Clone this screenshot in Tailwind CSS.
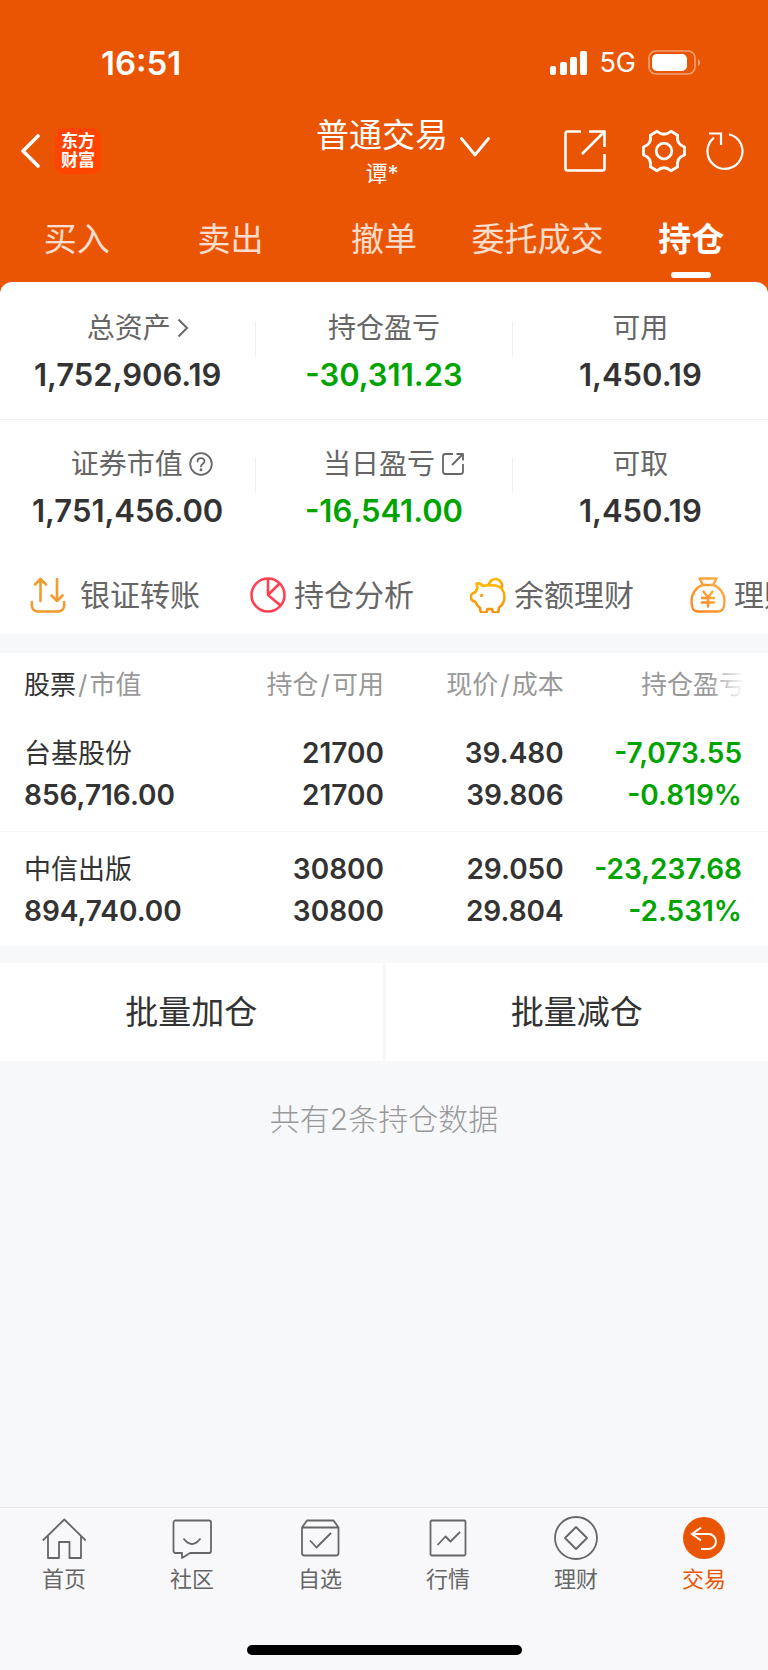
<!DOCTYPE html>
<html lang="zh-CN">
<head>
  <meta charset="UTF-8" />
  <meta name="viewport" content="width=device-width, initial-scale=1.0" />
  <title>普通交易 - 持仓</title>
  <script src="https://cdn.jsdelivr.net/npm/@tailwindcss/browser@4"></script>
</head>
<body class="bg-[#f7f8fa] text-[#333] font-['Inter','Noto_Sans_CJK_SC',sans-serif]">
  <div class="min-h-screen flex flex-col">

    <header class="bg-[#ea5504] text-white">
      <!-- Barra de estado -->
      <div class="flex items-center justify-between pt-[41px] pb-7 pl-[101px] pr-[67px]">
        <span class="text-[33px] leading-[44px] font-semibold">16:51</span>
        <div class="flex items-center gap-3">
          <svg class="w-[37px] h-6" viewBox="0 0 37 24" fill="currentColor">
            <rect x="0" y="15" width="6" height="9" rx="2" />
            <rect x="10" y="11" width="7" height="13" rx="2" />
            <rect x="20" y="6" width="7" height="18" rx="2" />
            <rect x="30" y="0" width="7" height="24" rx="2" />
          </svg>
          <span class="text-[27px] leading-[44px]">5G</span>
          <svg class="w-[53px] h-[26px]" viewBox="0 0 53 26">
            <rect x="1" y="1" width="46" height="23" rx="7" fill="none" stroke="#fff" stroke-opacity=".45" stroke-width="1.6" />
            <rect x="4" y="4" width="35" height="17" rx="5" fill="#fff" />
            <path d="M50 9v7q2-1 2-3.500t-2-3.500z" fill="#fff" fill-opacity=".5" />
          </svg>
        </div>
      </div>

      <!-- Navegación superior -->
      <div class="grid grid-cols-[1fr_auto_1fr] items-center pl-5 pr-6">
        <div class="flex items-center gap-[14px]">
          <button aria-label="返回">
            <svg class="w-[21px] h-[34px]" viewBox="0 0 21 34" fill="none" stroke="currentColor" stroke-width="3.6" stroke-linecap="round" stroke-linejoin="round">
              <path d="M18 2 3 17l15 15" />
            </svg>
          </button>
          <div class="flex flex-col items-center justify-center size-[46px] rounded-[9px] bg-[#ff4400] text-[17px] leading-[19px] font-bold">
            <span>东方</span>
            <span>财富</span>
          </div>
        </div>
        <div class="text-center">
          <h1 class="text-[33px] leading-[44px]">普通交易</h1>
          <p class="text-[22px] leading-8">谭*</p>
        </div>
        <div class="flex items-center">
          <button class="ml-3 mb-2" aria-label="切换账户">
            <svg class="w-[30px] h-5" viewBox="0 0 30 20" fill="none" stroke="currentColor" stroke-width="2.800" stroke-linecap="round" stroke-linejoin="round">
              <path d="M1.500 1.500 15 18 28.500 1.500" />
            </svg>
          </button>
          <button class="ml-auto" aria-label="分享">
            <svg class="size-[42px]" viewBox="0 0 42 42" fill="none" stroke="currentColor" stroke-width="2.600" stroke-linejoin="round">
              <path d="M17 1.500H3.500a2 2 0 0 0-2 2v35a2 2 0 0 0 2 2h35a2 2 0 0 0 2-2V24M25 1.500h15.500V17M40 2 18 24" />
            </svg>
          </button>
          <button class="ml-9" aria-label="设置">
            <svg class="size-11" viewBox="-22 -22 44 44" fill="none" stroke="currentColor" stroke-width="2.800" stroke-linejoin="round">
              <path d="M20.500 4Q12 6.900 13.700 15.800L7 19.800Q0 13.800-7 19.800L-13.700 15.800Q-12 6.900-20.500 4V-4Q-12-6.900-13.700-15.800L-7-19.800Q0-13.800 7-19.800L13.700-15.800Q12-6.900 20.500-4z" />
              <circle r="7.800" />
            </svg>
          </button>
          <button class="ml-5" aria-label="刷新">
            <svg class="size-[38px]" viewBox="0 0 38 38" fill="none" stroke="currentColor" stroke-width="2.200">
              <path d="M23 2.300A17.500 17.500 0 1 1 8 5.700M3 1.500h12V13" />
            </svg>
          </button>
        </div>
      </div>

      <!-- Pestañas -->
      <nav class="grid grid-cols-5 pt-7 pb-1 text-center text-[33px] leading-[44px] text-white/80">
        <a href="#">买入</a>
        <a href="#">卖出</a>
        <a href="#">撤单</a>
        <a href="#">委托成交</a>
        <a href="#" class="flex flex-col items-center gap-[11px] font-bold text-white">
          持仓
          <span class="w-10 h-[6px] rounded-full bg-white"></span>
        </a>
      </nav>
    </header>

    <!-- Resumen de activos -->
    <div class="bg-[#ea5504]">
      <section class="bg-white rounded-t-xl">
        <div class="flex items-start pt-7 pb-[22px] border-b border-[#f3f3f5] text-center">
          <div class="flex-1 flex flex-col gap-[7px]">
            <a href="#" class="flex items-center justify-center gap-[6px] pl-5 text-[28px] leading-9 text-[#666]">
              总资产
              <svg class="w-3 h-5" viewBox="0 0 12 20" fill="none" stroke="currentColor" stroke-width="2">
                <path d="m1.500 1.500 8.500 8.500-8.500 8.500" />
              </svg>
            </a>
            <span class="text-[31px] leading-[44px] font-semibold">1,752,906.19</span>
          </div>
          <div class="w-px h-[34px] mt-3 bg-[#eeeeee]"></div>
          <div class="flex-1 flex flex-col gap-[7px]">
            <span class="text-[28px] leading-9 text-[#666]">持仓盈亏</span>
            <span class="text-[31px] leading-[44px] font-semibold text-[#00a400]">-30,311.23</span>
          </div>
          <div class="w-px h-[34px] mt-3 bg-[#eeeeee]"></div>
          <div class="flex-1 flex flex-col gap-[7px]">
            <span class="text-[28px] leading-9 text-[#666]">可用</span>
            <span class="text-[31px] leading-[44px] font-semibold">1,450.19</span>
          </div>
        </div>

        <div class="flex items-start pt-[26px] pb-[23px] text-center">
          <div class="flex-1 flex flex-col gap-[7px]">
            <div class="flex items-center justify-center gap-[6px] pl-7 text-[28px] leading-9 text-[#666]">
              证券市值
              <button aria-label="说明">
                <svg class="size-6" viewBox="0 0 24 24" fill="none" stroke="currentColor" stroke-width="1.800" stroke-linecap="round">
                  <circle cx="12" cy="12" r="10.800" />
                  <path d="M8.500 9.500C8.500 5 15.500 5 15.500 9.300c0 2.400-3.300 2.600-3.500 5.200" />
                  <circle cx="12" cy="17.800" r=".6" fill="currentColor" />
                </svg>
              </button>
            </div>
            <span class="text-[31px] leading-[44px] font-semibold">1,751,456.00</span>
          </div>
          <div class="w-px h-[34px] mt-3 bg-[#eeeeee]"></div>
          <div class="flex-1 flex flex-col gap-[7px]">
            <a href="#" class="flex items-center justify-center gap-[6px] pl-5 text-[28px] leading-9 text-[#666]">
              当日盈亏
              <svg class="size-6" viewBox="0 0 24 24" fill="none" stroke="currentColor" stroke-width="1.800" stroke-linejoin="round">
                <path d="M12 2H4.500A2.500 2.500 0 0 0 2 4.500v15A2.500 2.500 0 0 0 4.500 22h15a2.500 2.500 0 0 0 2.500-2.500V12M15.500 2H22v6.500M22 2 11 13" />
              </svg>
            </a>
            <span class="text-[31px] leading-[44px] font-semibold text-[#00a400]">-16,541.00</span>
          </div>
          <div class="w-px h-[34px] mt-3 bg-[#eeeeee]"></div>
          <div class="flex-1 flex flex-col gap-[7px]">
            <span class="text-[28px] leading-9 text-[#666]">可取</span>
            <span class="text-[31px] leading-[44px] font-semibold">1,450.19</span>
          </div>
        </div>

        <!-- Accesos directos -->
        <div class="flex items-center h-[78px] pl-[30px] overflow-hidden whitespace-nowrap text-[30px] leading-10 text-[#666]">
          <a href="#" class="flex shrink-0 items-center gap-[14px] w-[220px]">
            <svg class="size-9" viewBox="0 0 36 36" fill="none" stroke="#f29b2e" stroke-width="2.600" stroke-linecap="round" stroke-linejoin="round">
              <path d="M10.500 24V2M5 7.500 10.500 2l5.500 5.500M27 2v22M21.500 18.500 27 24l5.500-5.500M1.800 25v3.500a6 6 0 0 0 6 6h20.400a6 6 0 0 0 6-6V25" />
            </svg>
            银证转账
          </a>
          <a href="#" class="flex shrink-0 items-center gap-2 w-[220px]">
            <svg class="size-9" viewBox="0 0 36 36" fill="none" stroke="#ff4050" stroke-width="2.600" stroke-linejoin="round">
              <circle cx="18" cy="18" r="16.500" />
              <path d="M18 1.500V18L29.500 6.500M18 18l12.500 10.500" />
            </svg>
            持仓分析
          </a>
          <a href="#" class="flex shrink-0 items-center gap-2 w-[220px]">
            <svg class="size-9" viewBox="0 0 36 36" fill="none" stroke="url(#pig)" stroke-width="2.600" stroke-linejoin="round">
              <defs>
                <linearGradient id="pig" x1="0" y1="0" x2="0" y2="1">
                  <stop offset="0" stop-color="#ffb800" />
                  <stop offset="1" stop-color="#f78f0c" />
                </linearGradient>
              </defs>
              <path d="M19 8.500A6.500 6.500 0 1 1 31 12" />
              <path d="M6.500 6.500c3-.5 5 .5 6.500 2.500 4-1 8.500-1 12.500-.5 5.500 1 9 5.500 9 11.500 0 4.500-2 8-5.500 10.500l-.5 3.500q-.5 1.500-2 1.500h-2q-1.500 0-2-1.500l-.5-2h-4.500l-.5 2q-.5 1.500-2 1.500h-2.500q-1.500 0-2-1.500L10 31c-2-1.500-3.500-3.500-4.500-6l-3-1.500q-1.500-1-1.500-2.500v-2q0-1.500 1.500-2.500l3-1.500c.5-1.500 1-2.500 2-3.500z" />
              <circle cx="11.500" cy="18.500" r="1.700" fill="#f9a010" stroke="none" />
            </svg>
            余额理财
          </a>
          <a href="#" class="flex shrink-0 items-center gap-2 w-[220px]">
            <svg class="size-9" viewBox="0 0 36 36" fill="none" stroke="url(#bag)" stroke-width="2.400" stroke-linecap="round" stroke-linejoin="round">
              <defs>
                <linearGradient id="bag" x1="1" y1="0" x2="0" y2="1">
                  <stop offset="0" stop-color="#ffb04a" />
                  <stop offset="1" stop-color="#ff8419" />
                </linearGradient>
              </defs>
              <path d="M9.500 1.500h17L23 8H13zM13 8C6 10 1.500 17 1.500 24c0 7 1.500 10.500 6.500 10.500h20c5 0 6.500-3.500 6.500-10.500C34.500 17 30 10 23 8" />
              <path d="m13.500 14.500 4.500 6 4.500-6M12 21h12M12 25.500h12M18 21v8.500" />
            </svg>
            理财
          </a>
        </div>
      </section>
    </div>

    <!-- Posiciones -->
    <section class="mt-[19px] bg-white">
      <table class="w-full table-fixed text-right text-[28px] leading-[42px] font-semibold">
        <colgroup>
          <col class="w-[25%]" />
          <col class="w-[25%]" />
          <col class="w-[23.4%]" />
          <col />
        </colgroup>
        <thead>
          <tr class="h-[61px] text-[26px] text-[#999] whitespace-nowrap">
            <th class="pl-6 pt-[2px] text-left font-normal"><span class="text-[#333]">股票</span><span class="mx-[2px]">/</span>市值</th>
            <th class="pt-[2px] font-normal">持仓<span class="mx-[2px]">/</span>可用</th>
            <th class="pt-[2px] font-normal">现价<span class="mx-[2px]">/</span>成本</th>
            <th class="pt-[2px] pr-[23px] font-normal">
              <div class="relative">
                持仓盈亏
                <span class="absolute inset-y-0 right-0 w-9 bg-linear-to-r from-white/0 to-white"></span>
              </div>
            </th>
          </tr>
        </thead>
        <tbody>
          <tr class="border-b border-[#f5f5f7]">
            <td class="pl-6 pt-[18px] pb-[15px] text-left"><div class="pt-[2px] text-[27px] leading-10 font-normal">台基股份</div>856,716.00</td>
            <td class="pt-[18px] pb-[15px]">21700<br />21700</td>
            <td class="pt-[18px] pb-[15px]">39.480<br />39.806</td>
            <td class="pt-[18px] pb-[15px] pr-[26px] text-[#00a400]">-7,073.55<br />-0.819%</td>
          </tr>
          <tr>
            <td class="pl-6 pt-4 pb-[14px] text-left"><div class="pt-[2px] text-[27px] leading-10 font-normal">中信出版</div>894,740.00</td>
            <td class="pt-4 pb-[14px]">30800<br />30800</td>
            <td class="pt-4 pb-[14px]">29.050<br />29.804</td>
            <td class="pt-4 pb-[14px] pr-[26px] text-[#00a400]">-23,237.68<br />-2.531%</td>
          </tr>
        </tbody>
      </table>
    </section>

    <div class="grid grid-cols-2 gap-[3px] mt-[17px] text-[33px] leading-[98px]">
      <button class="bg-white">批量加仓</button>
      <button class="bg-white">批量减仓</button>
    </div>

    <p class="mt-[38px] text-center text-[30px] leading-10 font-light text-[#999]">共有2条持仓数据</p>

    <!-- Barra inferior -->
    <footer class="mt-auto bg-[#f8f8fb] border-t border-[#e8e8ea]">
      <nav class="grid grid-cols-6 pt-2 text-[22px] leading-7 text-[#666]">
        <a href="#" class="flex flex-col items-center gap-[5px]">
          <svg class="size-11" viewBox="0 0 44 44" fill="none" stroke="currentColor" stroke-width="1.800" stroke-linejoin="round">
            <path d="M.8 24.500 22.300 3.500 43.800 24.500M6 20v22h11V26h10.500v16H39V20" />
          </svg>
          首页
        </a>
        <a href="#" class="flex flex-col items-center gap-[5px]">
          <svg class="size-11" viewBox="0 0 44 44" fill="none" stroke="currentColor" stroke-width="1.800" stroke-linejoin="round">
            <path d="M5 4.500h34a2 2 0 0 1 2 2V35a2 2 0 0 1-2 2H20l-8 5v-5H5.500a2 2 0 0 1-2-2V6.500a2 2 0 0 1 1.500-2z" />
            <path d="M13.500 22.500q8.500 11 17 0" />
          </svg>
          社区
        </a>
        <a href="#" class="flex flex-col items-center gap-[5px]">
          <svg class="size-11" viewBox="0 0 44 44" fill="none" stroke="currentColor" stroke-width="1.800" stroke-linejoin="round">
            <path d="M4 11.500h36.500V37a2.500 2.500 0 0 1-2.500 2.500H6.500A2.500 2.500 0 0 1 4 37zL9 4.500h26.500l5 7M12 24.500l6.500 7L33 17" />
          </svg>
          自选
        </a>
        <a href="#" class="flex flex-col items-center gap-[5px]">
          <svg class="size-11" viewBox="0 0 44 44" fill="none" stroke="currentColor" stroke-width="1.800" stroke-linejoin="round">
            <rect x="4.500" y="4.500" width="35" height="35" rx="1.500" />
            <path d="m11.500 29 8-8.500 5 5 9.500-9.500" />
          </svg>
          行情
        </a>
        <a href="#" class="flex flex-col items-center gap-[5px]">
          <svg class="size-11" viewBox="0 0 44 44" fill="none" stroke="currentColor" stroke-width="1.800" stroke-linejoin="round">
            <circle cx="22" cy="22" r="21" />
            <path d="m22 11 11 11-11 11-11-11z" />
          </svg>
          理财
        </a>
        <a href="#" class="flex flex-col items-center gap-[5px] text-[#ea5504]">
          <svg class="size-11" viewBox="0 0 44 44" fill="none" stroke="#fff" stroke-width="2">
            <circle cx="22" cy="22" r="21" fill="#ea5504" stroke="none" />
            <path d="M19 11.500 10 18l9 6.500M10 18h16.500a7.500 7.500 0 0 1 0 15H19" />
          </svg>
          交易
        </a>
      </nav>
      <div class="w-[275px] h-[10px] mx-auto mt-[52px] mb-[15px] rounded-full bg-black"></div>
    </footer>
  </div>
</body>
</html>
